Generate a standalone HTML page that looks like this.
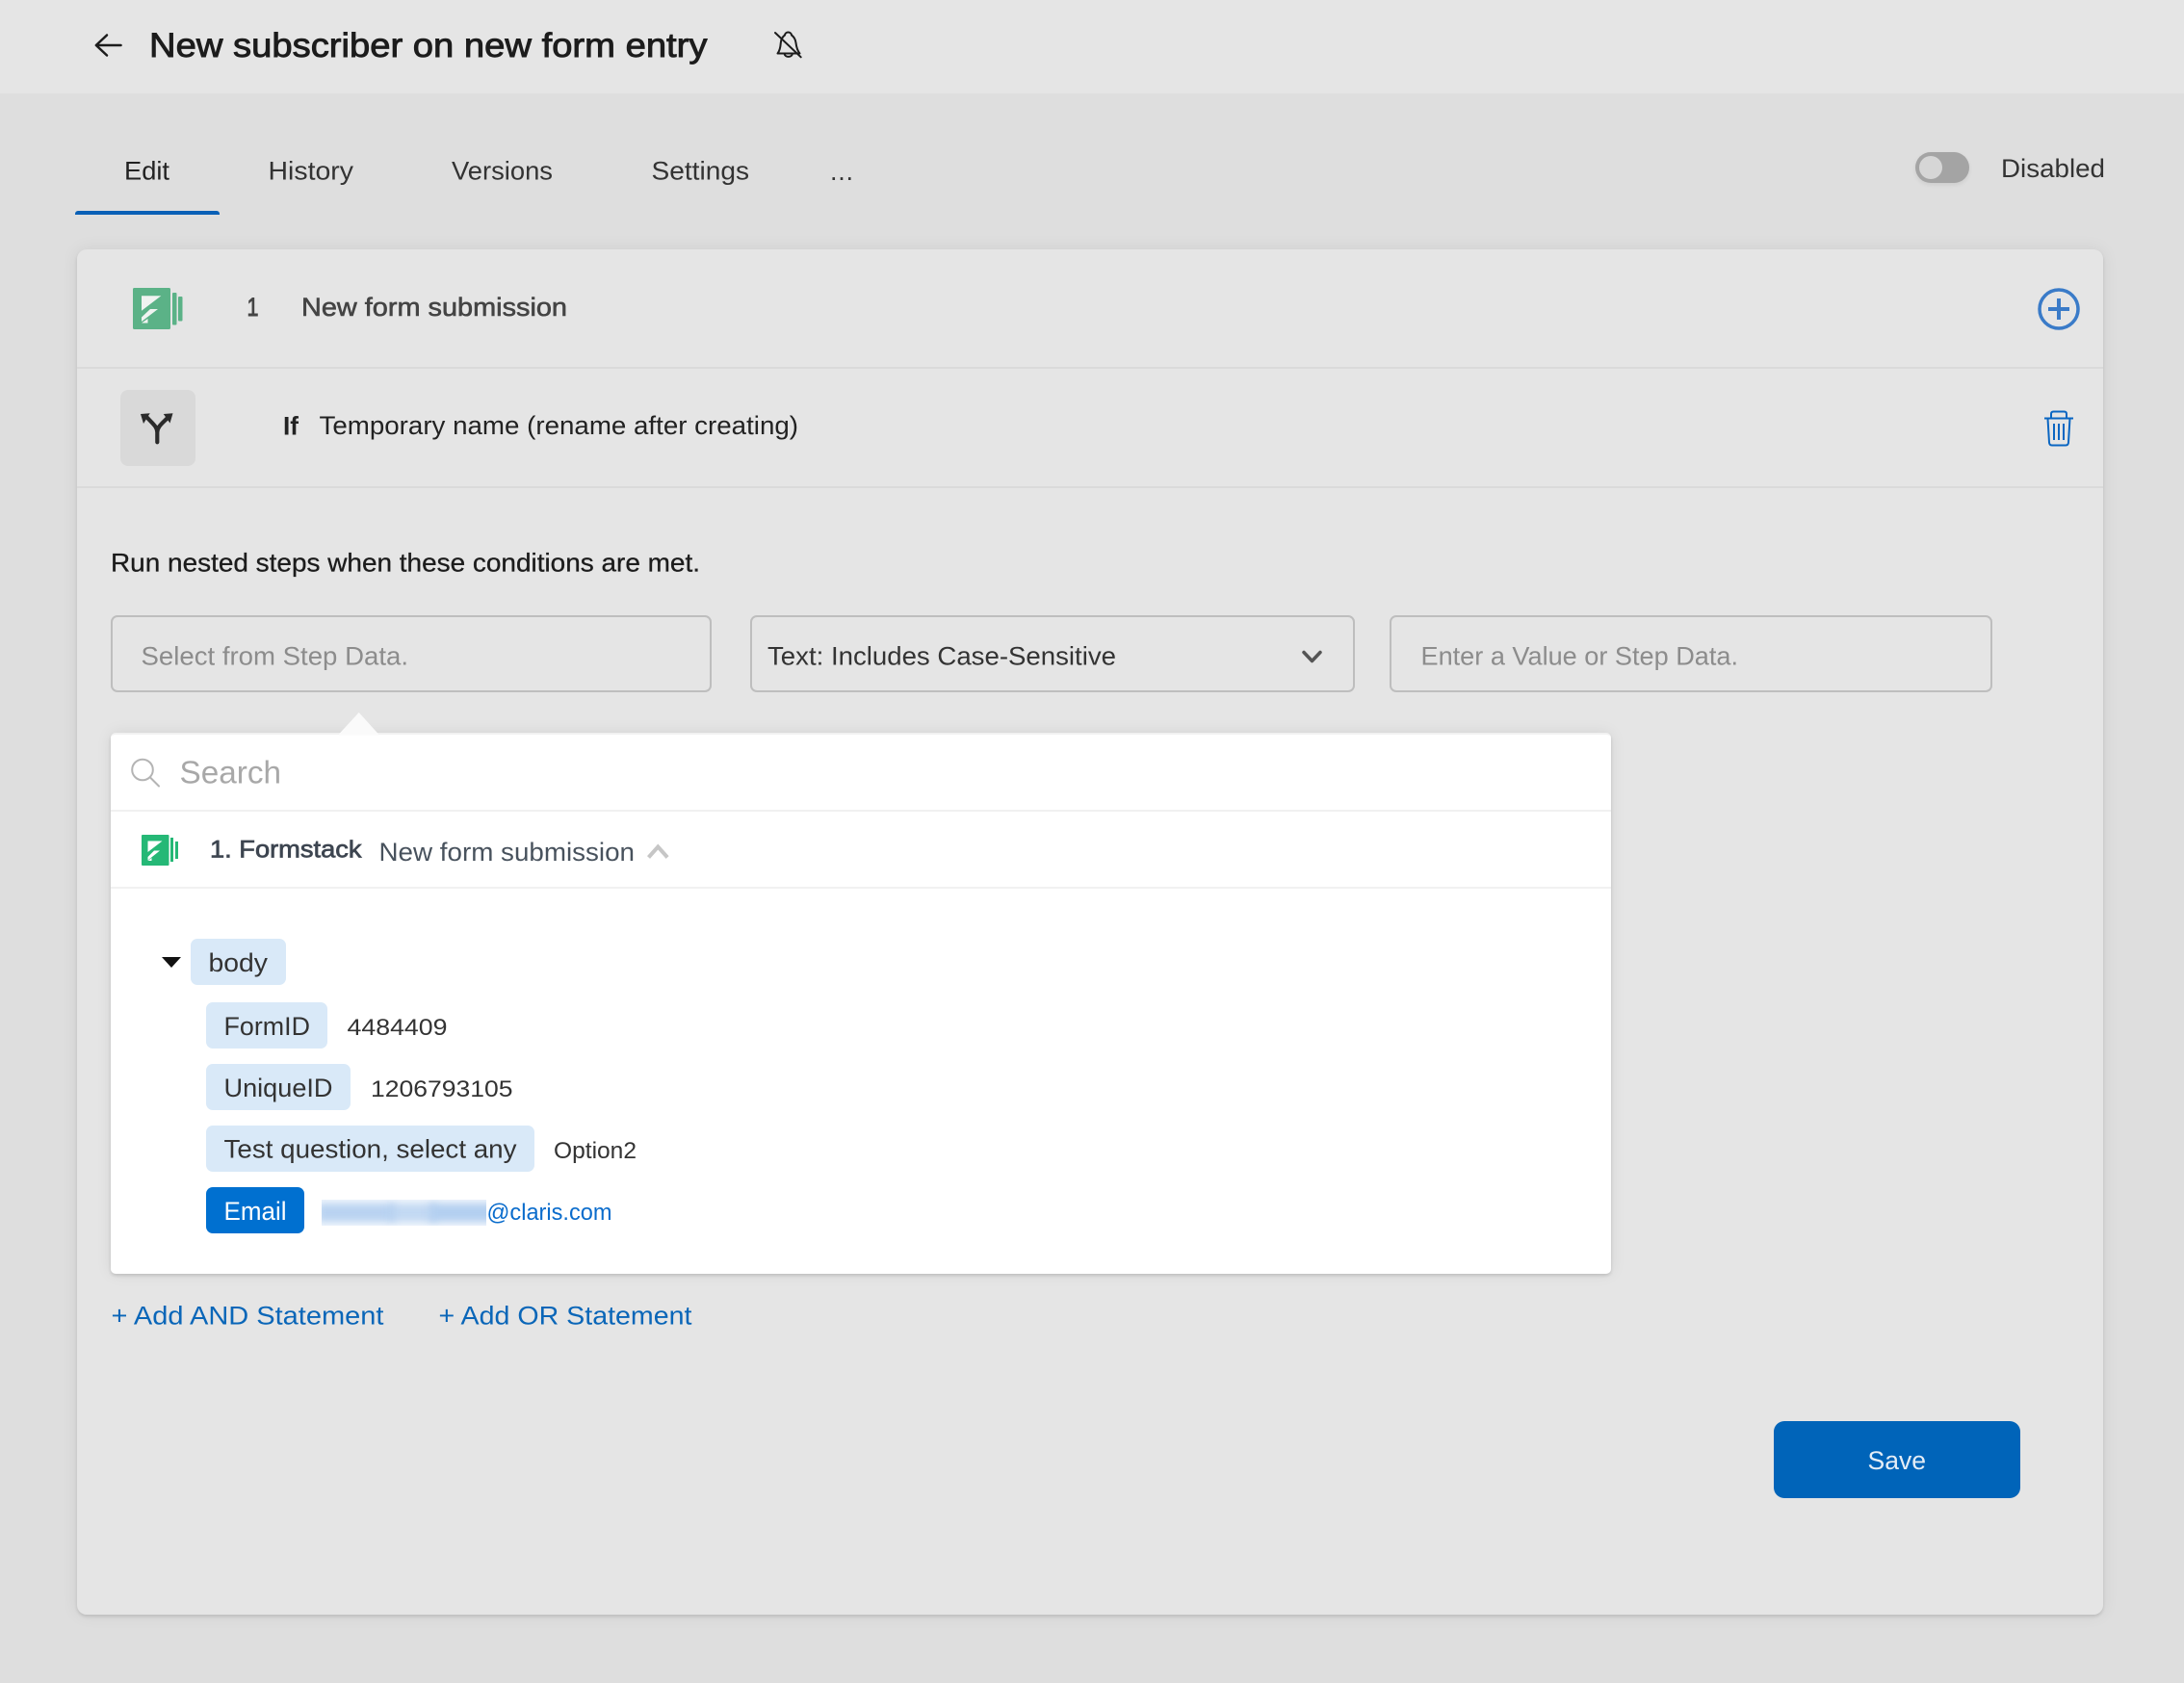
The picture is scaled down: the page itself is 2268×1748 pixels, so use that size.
<!DOCTYPE html>
<html lang="en">
<head>
<meta charset="utf-8">
<title>New subscriber on new form entry</title>
<style>
html,body{margin:0;padding:0;background:#dedede}
body{position:relative;width:2268px;height:1748px;overflow:hidden;font-family:"Liberation Sans",Arial,sans-serif}
.a{position:absolute;box-sizing:border-box}
.header{left:0;top:0;width:2268px;height:97px;background:#e5e5e5}
.tabline{left:78px;top:219px;width:150px;height:4px;background:#0a60b6;border-radius:3px 3px 0 0}
.toggle{left:1989px;top:158px;width:56px;height:32px;background:#a4a4a4;border-radius:16px;box-shadow:0 2px 5px rgba(0,0,0,.08)}
.knob{left:4px;top:4px;width:24px;height:24px;border-radius:50%;background:#d6d6d6}
.card{left:79.500px;top:259px;width:2104.500px;height:1418px;background:#e5e5e5;border-radius:10px;box-shadow:0 2px 3px rgba(0,0,0,.12),0 0 18px rgba(0,0,0,.07)}
.hr{left:80px;width:2104px;height:2px;background:#dadada}
.iconbox{left:124.500px;top:405px;width:78px;height:79px;background:#d9d9d9;border-radius:8px}
.input{top:639px;height:80px;border:2px solid #bebebe;border-radius:7px}
.panel{left:114.500px;top:761px;width:1558.500px;height:562px;background:#fff;border-top:2px solid #f1f1f1;border-radius:5px;box-shadow:0 2px 3px rgba(0,0,0,.13),0 0 16px rgba(0,0,0,.08)}
.phr{left:115px;width:1558px;height:2px;background:#f1f1f1}
.chip{height:48px;background:#d9e9f8;border-radius:7px}
.blue{background:#0070d0}
.blurbox{left:334px;top:1246px;width:171px;height:27px;background:#f1f6fc;overflow:hidden}
.blurbox i{position:absolute;top:4px;height:19px;background:#b3cff0;filter:blur(4px)}
.save{left:1842px;top:1476px;width:256px;height:80px;background:#0064b9;border-radius:11px}
svg{position:absolute;left:0;top:0}
text{font-family:"Liberation Sans",Arial,sans-serif;font-size:27px}
</style>
</head>
<body>
<div class="a header"></div>
<div class="a tabline"></div>
<div class="a toggle"><div class="a knob"></div></div>
<div class="a card"></div>
<div class="a hr" style="top:381px"></div>
<div class="a hr" style="top:505px"></div>
<div class="a iconbox"></div>
<div class="a input" style="left:114.500px;width:624.500px"></div>
<div class="a input" style="left:779px;width:628px"></div>
<div class="a input" style="left:1443px;width:626px"></div>
<div class="a panel"></div>
<div class="a phr" style="top:841px"></div>
<div class="a phr" style="top:921px"></div>
<div class="a chip" style="left:198px;top:975px;width:99px"></div>
<div class="a chip" style="left:214px;top:1041px;width:126px"></div>
<div class="a chip" style="left:214px;top:1105px;width:150px"></div>
<div class="a chip" style="left:214px;top:1169px;width:341px"></div>
<div class="a chip blue" style="left:214px;top:1233px;width:102px"></div>
<div class="a blurbox"><i style="left:-4px;width:80px;opacity:.9"></i><i style="left:70px;width:50px;opacity:.75"></i><i style="left:112px;width:70px"></i></div>
<div class="a save"></div>

<svg width="2268" height="1748" viewBox="0 0 2268 1748" xmlns="http://www.w3.org/2000/svg">
  <!-- back arrow -->
  <path d="M125.500 47H100M111 36.500 99.800 47 111 57.500" fill="none" stroke="#1c1c1c" stroke-width="2.500" stroke-linecap="round" stroke-linejoin="round"/>
  <text x="155" y="59" style="font-size:35px" textLength="579.500" lengthAdjust="spacingAndGlyphs" fill="#1c1c1c" stroke="#1c1c1c" stroke-width=".9">New subscriber on new form entry</text>
  <!-- muted bell -->
  <g fill="none" stroke="#1c1c1c" stroke-width="2" stroke-linecap="round" stroke-linejoin="round">
    <path d="M815 36.500c.5-4 6.500-4 7 0 3 2 4 4.500 4.500 8 .5 4 1.500 8 4 11H807.500c2.500-3 3-7 3.300-11 .3-3.500 1.200-6 4.200-8z"/>
    <path d="M814.500 55.500c.5 4.500 8 4.500 8.500 0"/>
    <path d="M805 34 831.700 59.300"/>
  </g>
  <!-- tabs -->
  <text x="129" y="186.500" textLength="47" lengthAdjust="spacingAndGlyphs" fill="#222">Edit</text>
  <text x="278.500" y="186.500" textLength="88.500" lengthAdjust="spacingAndGlyphs" fill="#333">History</text>
  <text x="469" y="186.500" textLength="105" lengthAdjust="spacingAndGlyphs" fill="#333">Versions</text>
  <text x="676.500" y="186.500" textLength="101.500" lengthAdjust="spacingAndGlyphs" fill="#333">Settings</text>
  <text x="862" y="187" textLength="24" lengthAdjust="spacing" fill="#333">...</text>
  <text x="2078" y="184" textLength="108" lengthAdjust="spacingAndGlyphs" fill="#333">Disabled</text>
  <!-- plus -->
  <circle cx="2138" cy="321" r="20" fill="none" stroke="#3a7bc8" stroke-width="3.500"/>
  <path d="M2127 321h22M2138 310v22" stroke="#3a7bc8" stroke-width="4" fill="none"/>
  <!-- trash -->
  <g fill="none" stroke="#0a66c2" stroke-width="2" stroke-linejoin="round">
    <path d="M2123 434.500h30M2130 434.500v-4.500c0-1.600 1-2.500 2.500-2.500h11c1.500 0 2.500.9 2.500 2.500v4.500"/>
    <path d="M2126.500 434.500l1.500 25c.1 2 1.200 3 3 3h14c1.800 0 2.900-1 3-3l1.500-25"/>
    <path d="M2133 440v17M2138 440v17M2143 440v17"/>
  </g>
  <!-- Formstack icon row 1 -->
  <rect x="138" y="299" width="39" height="43" rx="1.500" fill="#5bb287"/>
  <rect x="179" y="304" width="4.500" height="33.500" rx="1" fill="#5bb287"/>
  <rect x="185" y="308" width="4.500" height="25.500" rx="1" fill="#5bb287"/>
  <path d="M147 307.300h20.300L147 322.700zM147 329.500l9-8.500h8L147 334zM147 335.500l6.500-4.500v4.500z" fill="#f0f3f1"/>
  <text x="256.500" y="328" textLength="12" lengthAdjust="spacingAndGlyphs" fill="#444" stroke="#444" stroke-width=".9">1</text>
  <text x="313" y="328" textLength="276" lengthAdjust="spacingAndGlyphs" fill="#444" stroke="#444" stroke-width=".6">New form submission</text>
  <!-- branch icon -->
  <path d="M163.300 459.300V449c0-6-5-9-12-17M163.300 449c0-6 5-9 12.700-17" fill="none" stroke="#2b2b2b" stroke-width="4.200" stroke-linecap="round"/>
  <path d="M146 430l9.700-.7L149 440zM179.500 429.300l-9.700.7 6.700 9.500z" fill="#2b2b2b"/>
  <text x="294" y="451.500" font-weight="bold" textLength="16" lengthAdjust="spacingAndGlyphs" fill="#222">If</text>
  <text x="331.500" y="451" textLength="497.500" lengthAdjust="spacingAndGlyphs" fill="#222">Temporary name (rename after creating)</text>
  <text x="115" y="593.500" textLength="612" lengthAdjust="spacingAndGlyphs" fill="#1c1c1c" stroke="#1c1c1c" stroke-width=".3">Run nested steps when these conditions are met.</text>
  <!-- inputs -->
  <text x="146.500" y="690.500" textLength="277.500" lengthAdjust="spacingAndGlyphs" fill="#8c8c8c">Select from Step Data.</text>
  <text x="797" y="690.500" textLength="362" lengthAdjust="spacingAndGlyphs" fill="#333">Text: Includes Case-Sensitive</text>
  <path d="M1354 677.500l8.500 9 8.500-9" fill="none" stroke="#555" stroke-width="3.500" stroke-linecap="round" stroke-linejoin="round"/>
  <text x="1475.500" y="690.500" textLength="329.500" lengthAdjust="spacingAndGlyphs" fill="#8c8c8c">Enter a Value or Step Data.</text>
  <!-- notch -->
  <path d="M351 763.500 372.700 740 394 763.500z" fill="#fafafa"/>
  <!-- search -->
  <circle cx="148" cy="799.500" r="10.800" fill="none" stroke="#b4b4b4" stroke-width="2"/>
  <path d="M156 807.500l9 9" stroke="#b4b4b4" stroke-width="2" stroke-linecap="round"/>
  <text x="186.500" y="813.500" style="font-size:33px" textLength="105.500" lengthAdjust="spacingAndGlyphs" fill="#a8a8a8">Search</text>
  <!-- Formstack icon panel -->
  <rect x="147" y="867" width="28.500" height="32" rx="1" fill="#25b876"/>
  <rect x="177" y="870" width="3" height="25" fill="#25b876"/>
  <rect x="182" y="874" width="3" height="18" fill="#25b876"/>
  <path d="M153.500 873.500h15l-15 11.500zM153.500 890l6.500-6.500h6l-12.500 10zM153.500 894l4-3v3z" fill="#fff"/>
  <text x="218" y="890.500" style="font-size:25px" textLength="157.500" lengthAdjust="spacingAndGlyphs" fill="#3d4550" stroke="#3d4550" stroke-width=".7">1. Formstack</text>
  <text x="393.500" y="894" textLength="265.500" lengthAdjust="spacingAndGlyphs" fill="#48525d">New form submission</text>
  <path d="M673.500 890.500 683.300 879.500l9.800 11" fill="none" stroke="#c6c6c6" stroke-width="4"/>
  <!-- tree -->
  <path d="M168 994h20l-10 11z" fill="#111"/>
  <text x="216.500" y="1009" textLength="61.500" lengthAdjust="spacingAndGlyphs" fill="#333">body</text>
  <text x="232.500" y="1075" textLength="89.500" lengthAdjust="spacingAndGlyphs" fill="#333">FormID</text>
  <text x="360.500" y="1075" style="font-size:24px" textLength="104" lengthAdjust="spacingAndGlyphs" fill="#333">4484409</text>
  <text x="232.500" y="1139" textLength="113" lengthAdjust="spacingAndGlyphs" fill="#333">UniqueID</text>
  <text x="385" y="1139" style="font-size:24px" textLength="147.500" lengthAdjust="spacingAndGlyphs" fill="#333">1206793105</text>
  <text x="232.500" y="1202.500" textLength="304" lengthAdjust="spacingAndGlyphs" fill="#333">Test question, select any</text>
  <text x="575" y="1203" style="font-size:24px" textLength="86" lengthAdjust="spacingAndGlyphs" fill="#333">Option2</text>
  <text x="232.500" y="1267" textLength="65" lengthAdjust="spacingAndGlyphs" fill="#fff">Email</text>
  <text x="505.500" y="1267" style="font-size:24px" textLength="130" lengthAdjust="spacingAndGlyphs" fill="#0a6ccc">@claris.com</text>
  <!-- add statements -->
  <text x="115.500" y="1375.500" textLength="283" lengthAdjust="spacingAndGlyphs" fill="#0a66b8">+ Add AND Statement</text>
  <text x="455.500" y="1375.500" textLength="263" lengthAdjust="spacingAndGlyphs" fill="#0a66b8">+ Add OR Statement</text>
  <!-- save -->
  <text x="1939.500" y="1526" textLength="60.500" lengthAdjust="spacingAndGlyphs" fill="#e4edf6">Save</text>
</svg>
</body>
</html>
